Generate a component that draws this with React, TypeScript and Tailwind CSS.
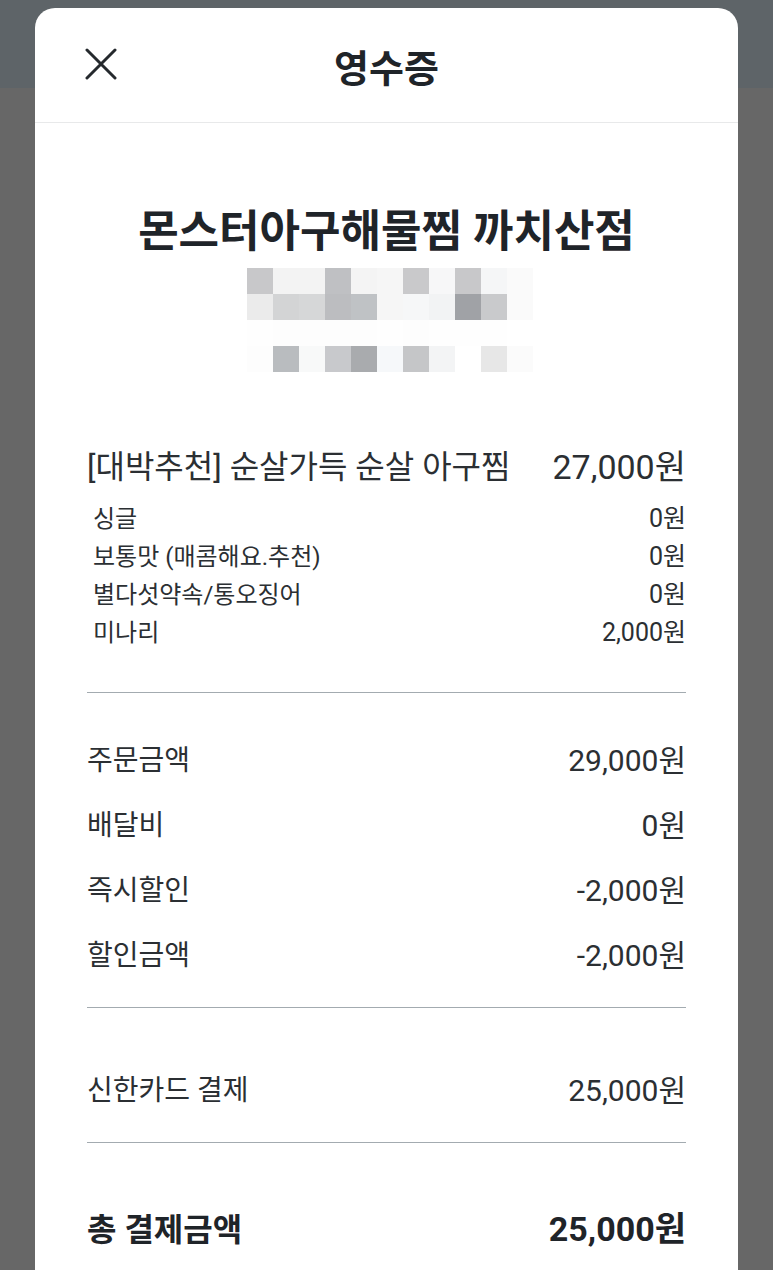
import React from "react";

const pixelRows: string[][] = [
  ["bg-[#c8c8ca]", "bg-[#f3f3f3]", "bg-[#f3f3f3]", "bg-[#bfc0c3]", "bg-[#f4f4f4]", "bg-[#f6f6f6]", "bg-[#c9c9cb]", "bg-[#f7f7f8]", "bg-[#c8c8ca]", "bg-[#f5f6f7]", "bg-[#fafafa]"],
  ["bg-[#ebebeb]", "bg-[#d3d4d5]", "bg-[#d6d7d8]", "bg-[#bcbdc0]", "bg-[#bfc2c5]", "bg-[#f6f6f6]", "bg-[#f6f7f8]", "bg-[#f2f3f4]", "bg-[#a0a2a6]", "bg-[#c9cacc]", "bg-[#fafafa]"],
  ["bg-[#fefefe]", "bg-[#fdfdfd]", "bg-[#fdfdfd]", "bg-[#fdfdfd]", "bg-[#fdfdfd]", "bg-[#fefefe]", "bg-[#fdfdfd]", "bg-[#fefefe]", "bg-[#fefefe]", "bg-[#fefefe]", "bg-[#ffffff]"],
  ["bg-[#fdfdfd]", "bg-[#b9bcbf]", "bg-[#f8f9f9]", "bg-[#c8c9cc]", "bg-[#a9abae]", "bg-[#f6f8fa]", "bg-[#c5c6c8]", "bg-[#f3f4f5]", "bg-[#ffffff]", "bg-[#e7e7e7]", "bg-[#fbfbfb]"],
];

const options = [
  { name: "싱글", price: "0원" },
  { name: "보통맛 (매콤해요.추천)", price: "0원" },
  { name: "별다섯약속/통오징어", price: "0원" },
  { name: "미나리", price: "2,000원" },
];

const summary = [
  { label: "주문금액", value: "29,000원" },
  { label: "배달비", value: "0원" },
  { label: "즉시할인", value: "-2,000원" },
  { label: "할인금액", value: "-2,000원" },
];

const Row = ({ label, value }: { label: string; value: string }) => (
  <div className="flex h-[65px] items-center justify-between text-[#2b2f33]">
    <span className="text-[28px]">{label}</span>
    <span className="text-[30px]">{value}</span>
  </div>
);

export default function App() {
  return (
    <div
      className="h-[1270px] overflow-hidden bg-[linear-gradient(to_bottom,#5e6468_88px,#676767_88px)] pt-[8px]"
      style={{ fontFamily: "Roboto, 'Noto Sans CJK KR', sans-serif" }}
    >
      <div className="mx-[35px] h-[1300px] rounded-t-[20px] bg-white">
        {/* header */}
        <div className="relative flex h-[115px] items-center justify-center border-b border-[#e8e9ea] pt-[8px]">
          <button className="absolute left-[50px] top-[40px] h-[32px] w-[32px] text-[#25292d]">
            <svg viewBox="0 0 32 32" width="32" height="32" fill="none" stroke="currentColor" strokeWidth="3" strokeLinecap="round">
              <path d="M2 2 L30 30 M30 2 L2 30" />
            </svg>
          </button>
          <h1 className="text-[38px] font-bold text-[#1f2429]">영수증</h1>
        </div>

        <div className="px-[52px]">
          {/* store */}
          <h2 className="pt-[85px] text-center text-[44px] font-bold leading-[48px] text-[#1f2429]">
            몬스터아구해물찜 까치산점
          </h2>
          <div className="ml-[160px] mt-[12px] w-[286px]">
            {pixelRows.map((row, i) => (
              <div key={i} className="flex">
                {row.map((c, j) => (
                  <div key={j} className={`h-[26px] w-[26px] ${c}`} />
                ))}
              </div>
            ))}
          </div>

          {/* menu */}
          <div className="mt-[75px] flex h-[40px] items-center justify-between text-[#2b2f33]">
            <span className="text-[32px]">[대박추천] 순살가득 순살 아구찜</span>
            <span className="text-[34px]">27,000원</span>
          </div>
          <div className="mt-[13px] pl-[6px] text-[#2b2f33]">
            {options.map((o) => (
              <div key={o.name} className="flex h-[38px] items-center justify-between">
                <span className="text-[24px]">{o.name}</span>
                <span className="text-[25px]">{o.price}</span>
              </div>
            ))}
          </div>

          <div className="mt-[40px] h-px bg-[#a3abb0]" />

          <div className="mt-[35px]">
            {summary.map((s) => (
              <Row key={s.label} label={s.label} value={s.value} />
            ))}
          </div>

          <div className="mt-[19px] h-px bg-[#a3abb0]" />

          <div className="mt-[50px]">
            <Row label="신한카드 결제" value="25,000원" />
          </div>

          <div className="mt-[19px] h-px bg-[#a3abb0]" />

          <div className="mt-[54px] flex h-[65px] items-center justify-between text-[#1f2429]">
            <span className="text-[32px] font-bold">총 결제금액</span>
            <span className="text-[34px] font-bold">25,000원</span>
          </div>
        </div>
      </div>
    </div>
  );
}
